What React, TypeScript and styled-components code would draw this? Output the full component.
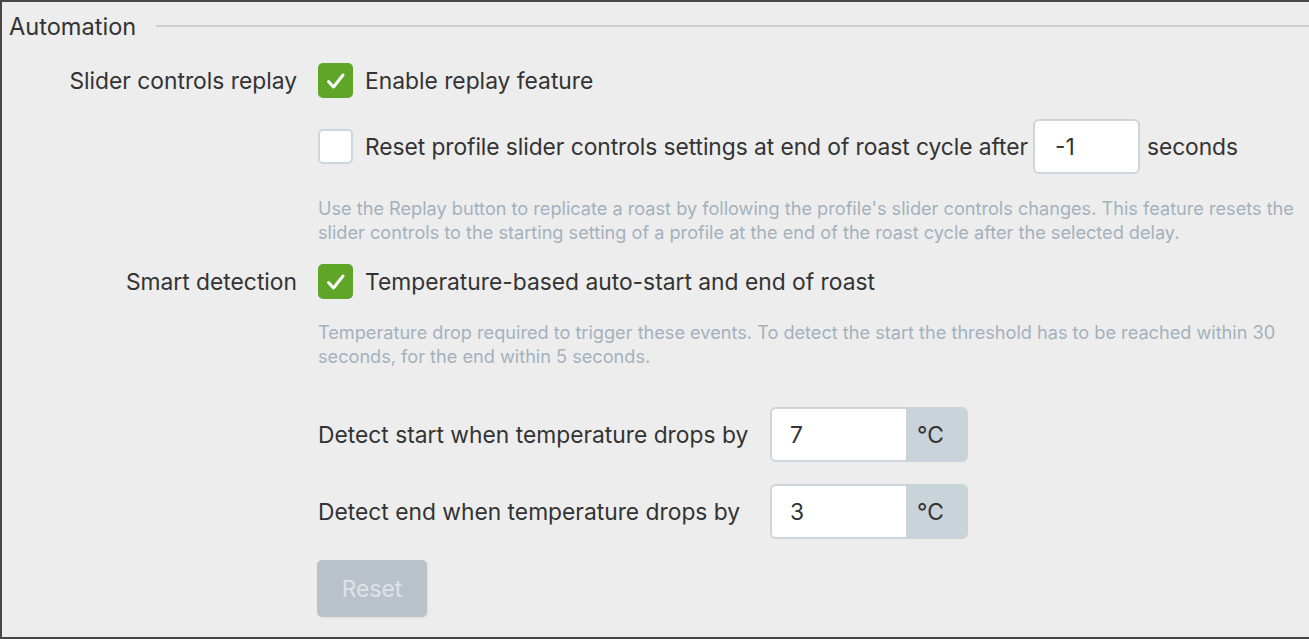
import React from "react";
import styled, { createGlobalStyle } from "styled-components";

const Global = createGlobalStyle`
  html, body { margin: 0; padding: 0; background: #ededed; }
  body { font-family: Inter, "Noto Sans", sans-serif; color: #333; }
`;

const Frame = styled.div`
  box-sizing: border-box;
  width: 1309px;
  height: 639px;
  border-top: 2px solid #474747;
  border-left: 2px solid #474747;
  border-bottom: 2px solid #474747;
  background: #ededed;
  overflow: hidden;
`;

const LegendRow = styled.div`
  display: flex;
  align-items: center;
  gap: 20px;
  padding: 10px 0 0 7px;
  height: 30px;
`;

const Legend = styled.div`
  font-size: 23.6px;
  line-height: 30px;
  color: #333;
`;

const Rule = styled.div`
  flex: 1;
  height: 2px;
  background: #cfcfcf;
  margin-top: -3px;
`;

const Grid = styled.div`
  display: grid;
  grid-template-columns: 295px 1fr;
  column-gap: 21px;
  padding-right: 8px;
`;

const Label = styled.div<{ $top: number; $h: number }>`
  grid-column: 1;
  margin-top: ${(p) => p.$top}px;
  height: ${(p) => p.$h}px;
  display: flex;
  align-items: center;
  justify-content: flex-end;
  font-size: 22.8px;
  color: #333;
`;

const Line = styled.div<{ $top: number; $h: number; $tight?: boolean }>`
  grid-column: 2;
  margin-top: ${(p) => p.$top}px;
  height: ${(p) => p.$h}px;
  display: flex;
  align-items: center;
  font-size: 22.8px;
  color: #333;
  white-space: nowrap;
  letter-spacing: ${(p) => (p.$tight ? "-0.07px" : "0")};
`;

const Box = styled.span<{ $on?: boolean }>`
  box-sizing: border-box;
  width: 35px;
  height: 35px;
  border-radius: 5px;
  flex: none;
  display: inline-flex;
  align-items: center;
  justify-content: center;
  margin-right: 12px;
  background: ${(p) => (p.$on ? "#5fa528" : "#ffffff")};
  border: ${(p) => (p.$on ? "none" : "2px solid #ccd6dc")};
`;

const NumInput = styled.span<{ $w: number; $pad: number; $joined?: boolean }>`
  box-sizing: border-box;
  width: ${(p) => p.$w}px;
  height: 55px;
  display: inline-flex;
  align-items: center;
  padding-left: ${(p) => p.$pad}px;
  background: #fff;
  border: 2px solid #ccd6dc;
  border-radius: ${(p) => (p.$joined ? "6px 0 0 6px" : "6px")};
  ${(p) => (p.$joined ? "border-right: none;" : "")}
  font-size: 22.8px;
  color: #333;
  letter-spacing: 0;
`;

const Unit = styled.span`
  box-sizing: border-box;
  width: 62px;
  height: 55px;
  display: inline-flex;
  align-items: center;
  padding-left: 11px;
  background: #c8d4da;
  border-radius: 0 6px 6px 0;
  font-size: 22.8px;
  color: #333;
`;

const Help = styled.div<{ $top: number }>`
  grid-column: 2;
  margin-top: ${(p) => p.$top}px;
  font-size: 18.15px;
  line-height: 24px;
  color: #a4b1bd;
`;

const FieldLabel = styled.span`
  width: 452px;
  flex: none;
`;

const Gap = styled.span<{ $w: number }>`
  display: inline-block;
  width: ${(p) => p.$w}px;
`;

const ResetButton = styled.button`
  grid-column: 2;
  justify-self: start;
  margin-top: 21px;
  width: 110px;
  height: 57px;
  border: none;
  border-radius: 5px;
  background: #b9c2ca;
  color: #dde3e7;
  font-family: Inter, "Noto Sans", sans-serif;
  font-size: 22.8px;
  box-shadow: 1px 1px 3px rgba(0, 0, 0, 0.06);
  margin-left: -1px;
  padding: 0;
`;

const Check = () => (
  <svg width="35" height="35" viewBox="0 0 35 35">
    <path d="M10.5 18.5 L15.5 24 L25 12" fill="none" stroke="#fff" strokeWidth="3" strokeLinecap="round" strokeLinejoin="round" />
  </svg>
);

export default function App() {
  return (
    <>
      <Global />
      <Frame>
        <LegendRow>
          <Legend>Automation</Legend>
          <Rule />
        </LegendRow>
        <Grid>
          <Label $top={21} $h={35}>Slider controls replay</Label>
          <Line $top={21} $h={35}>
            <Box $on><Check /></Box>
            Enable replay feature
          </Line>
          <Line $top={21} $h={55} $tight>
            <Box />
            Reset profile slider controls settings at end of roast cycle after
            <Gap $w={5} />
            <NumInput $w={107} $pad={20}>-1</NumInput>
            <Gap $w={7} />
            seconds
          </Line>
          <Help $top={22}>
            Use the Replay button to replicate a roast by following the profile's slider controls changes. This feature resets the slider controls to the starting setting of a profile at the end of the roast cycle after the selected delay.
          </Help>
          <Label $top={20} $h={35}>Smart detection</Label>
          <Line $top={20} $h={35}>
            <Box $on><Check /></Box>
            Temperature-based auto-start and end of roast
          </Line>
          <Help $top={21}>
            Temperature drop required to trigger these events. To detect the start the threshold has to be reached within 30 seconds, for the end within 5 seconds.
          </Help>
          <Line $top={39} $h={55}>
            <FieldLabel>Detect start when temperature drops by</FieldLabel>
            <NumInput $w={136} $pad={18} $joined>7</NumInput>
            <Unit>°C</Unit>
          </Line>
          <Line $top={22} $h={55}>
            <FieldLabel>Detect end when temperature drops by</FieldLabel>
            <NumInput $w={136} $pad={18} $joined>3</NumInput>
            <Unit>°C</Unit>
          </Line>
          <ResetButton>Reset</ResetButton>
        </Grid>
      </Frame>
    </>
  );
}
